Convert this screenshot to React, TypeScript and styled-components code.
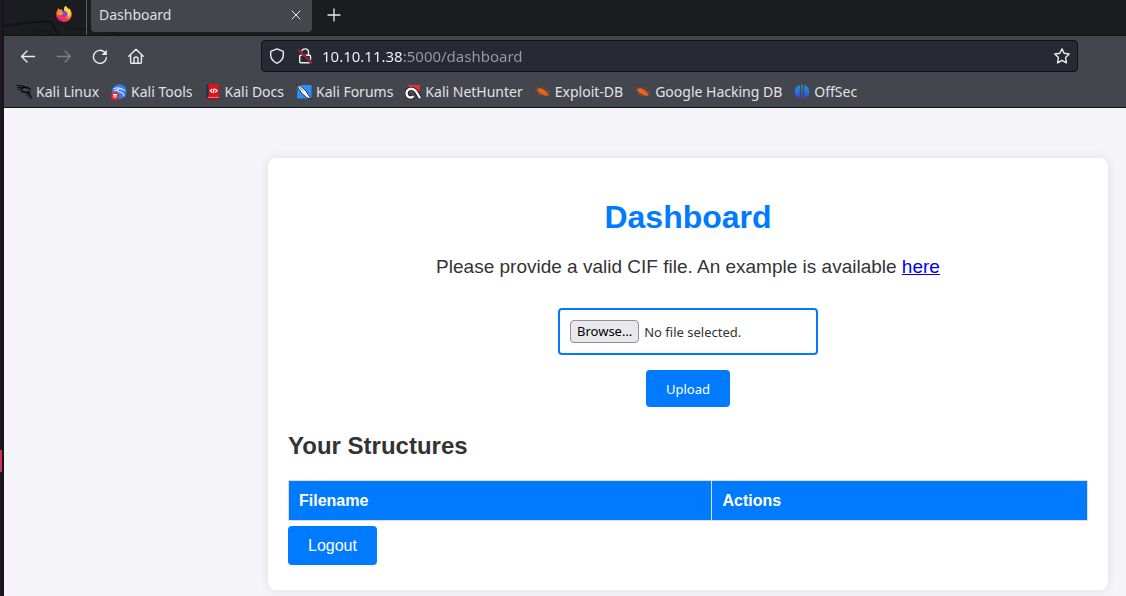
import React from "react";
import styled, { createGlobalStyle } from "styled-components";

const ui = '"Noto Sans", "Open Sans", sans-serif';
const page = '"Liberation Sans", Arial, sans-serif';
const blue = "#007bff";

const Global = createGlobalStyle`
  *, *::before, *::after { box-sizing: border-box; }
  body { margin: 0; background: #f4f4f9; }
`;

const Desktop = styled.div`
  display: flex;
  min-height: 100vh;
  overflow: hidden;
`;

const Edge = styled.div`
  flex: 0 0 4px;
  display: flex;
  flex-direction: column;
  background: #22171f;
  border-right: 2px solid #14151c;
`;

const EdgeMark = styled.span`
  height: 22px;
  margin-top: 450px;
  background: #cc3359;
`;

const Window = styled.div`
  flex: 1;
  min-width: 0;
  display: flex;
  flex-direction: column;
`;

const TabStrip = styled.div`
  position: relative;
  display: flex;
  align-items: flex-start;
  height: 36px;
  background: #1b1c20;
  border-bottom: 1px solid #111216;
`;

const Wallpaper = styled.svg`
  position: absolute;
  left: 0;
  bottom: 0;
`;

const Launcher = styled.div`
  position: relative;
  display: flex;
  justify-content: flex-end;
  width: 83px;
  height: 35px;
  padding: 5px 13px 0 0;
  border-right: 1px solid #5b5d62;
`;

const Tab = styled.div`
  position: relative;
  display: flex;
  align-items: center;
  justify-content: space-between;
  width: 221px;
  height: 32px;
  margin-left: 4px;
  padding: 0 8px 2px;
  border-radius: 0 0 4px 4px;
  background: #43464d;
  color: #dfdfe1;
  font: 14px/20px ${ui};
`;

const IconButton = styled.button<{ $w?: number; $dim?: boolean }>`
  display: flex;
  align-items: center;
  justify-content: center;
  width: ${(p) => p.$w ?? 36}px;
  height: 32px;
  padding: 0;
  border: 0;
  background: none;
  color: ${(p) => (p.$dim ? "#7d7f84" : "#ececee")};
  svg { flex: none; }
`;

const NewTab = styled(IconButton)`
  position: relative;
  margin-left: 4px;
  height: 30px;
`;

const Toolbar = styled.div`
  display: flex;
  align-items: center;
  height: 40px;
  padding-right: 48px;
  background: #43464d;
`;

const Nav = styled.nav`
  display: flex;
  flex: 0 0 257px;
  padding-left: 6px;
`;

const AddressBox = styled.div`
  flex: 1;
  display: flex;
  align-items: center;
  height: 32px;
  padding: 0 0 0 2px;
  border: 1px solid #101116;
  border-radius: 4px;
  background: #272934;
`;

const Address = styled.input`
  flex: 1;
  min-width: 0;
  height: 28px;
  padding: 0;
  margin-left: 3px;
  border: 0;
  outline: 0;
  font: 15px/28px ${ui};
  color: transparent;
  background: linear-gradient(to right, #fbfbfe 81px, #9b9ca3 81px);
  background-clip: text;
  -webkit-background-clip: text;
`;

const Bookmarks = styled.nav`
  display: flex;
  align-items: center;
  gap: 12px;
  height: 32px;
  padding-left: 12px;
  background: #43464d;
  border-bottom: 1px solid #111216;
`;

const Bookmark = styled.a`
  display: flex;
  align-items: center;
  gap: 4px;
  color: #e2e2e4;
  font: 14px/20px ${ui};
  white-space: nowrap;
  text-decoration: none;
  svg { flex: none; }
`;

const Main = styled.main`
  flex: 1;
  display: flex;
  justify-content: flex-end;
  align-items: flex-start;
  padding: 50px 18px 6px;
  background: #f4f4f9;
  color: #333;
  font: 16px/18px ${page};
`;

const Card = styled.section`
  width: 100%;
  max-width: 840px;
  padding: 20px 20px 25px;
  border-radius: 8px;
  background: #fff;
  box-shadow: 0 0 10px rgba(0, 0, 0, 0.1);
`;

const Title = styled.h1`
  margin: 20px 0;
  color: ${blue};
  font-size: 32px;
  line-height: 38px;
  text-align: center;
`;

const Intro = styled.p`
  margin: 0 0 30px;
  font-size: 19px;
  line-height: 22px;
  text-align: center;
  a { color: #0000ee; }
`;

const UploadForm = styled.form`
  display: flex;
  flex-direction: column;
  align-items: center;
  gap: 15px;
`;

const FilePicker = styled.label`
  position: relative;
  display: flex;
  align-items: center;
  gap: 5px;
  width: 260px;
  height: 47px;
  padding: 0 10px;
  border: 2px solid ${blue};
  border-radius: 4px;
  font: 13px/18px ${ui};
`;

const FileInput = styled.input`
  position: absolute;
  inset: 0;
  width: 100%;
  opacity: 0;
`;

const Browse = styled.span`
  padding: 2px 6px;
  border: 1px solid #8f8f9d;
  border-radius: 4px;
  background: #e9e9ed;
  color: #000;
  line-height: 17px;
`;

const Submit = styled.button`
  height: 37px;
  padding: 0 20px;
  border: 0;
  border-radius: 4px;
  background: ${blue};
  color: #fff;
  font: 13px/18px ${ui};
`;

const Subtitle = styled.h2`
  margin: 25px 0 20px;
  font-size: 24px;
  line-height: 28px;
`;

const Table = styled.table`
  width: 100%;
  border-collapse: collapse;
`;

const Head = styled.th<{ $w: string }>`
  width: ${(p) => p.$w};
  height: 40px;
  padding: 10px;
  border: 1px solid #ddd;
  background: ${blue};
  color: #fff;
  text-align: left;
`;

const Logout = styled.a`
  display: inline-block;
  margin-top: 5px;
  padding: 10px 20px;
  border-radius: 4px;
  background: ${blue};
  color: #fff;
  line-height: 19px;
  text-decoration: none;
`;

const line = { fill: "none", stroke: "currentColor", strokeLinecap: "round", strokeLinejoin: "round" } as const;

const Firefox = () => (
  <svg width="18" height="18" viewBox="0 0 18 18">
    <defs>
      <linearGradient id="ff" x1=".8" y1=".1" x2=".3" y2="1">
        <stop offset="0" stopColor="#ffe33d" />
        <stop offset=".4" stopColor="#ff9a27" />
        <stop offset=".7" stopColor="#ff3b46" />
        <stop offset="1" stopColor="#e4157c" />
      </linearGradient>
    </defs>
    <path d="M10.500.8c1 1.500 2 2.200 3 3.400l.8-.7c1.700 2 2.500 4 2.300 6.300C16.500 13.800 13.200 17 9 17S1.200 13.900 1.200 9.600c0-2 .5-3.600 1.400-4.900L3.500 3l.9 1.800 2.500-.3c.4 1 1 1.500 2.100 1.700C8.700 4 9.200 2.200 10.500.8Z" fill="url(#ff)" />
    <path d="M6.500 6c2-.7 4-.1 5.200 1.200 1.500 1.900.5 4.500-2.100 4.900-2.100.2-3.500-1-3.700-2.700l1.600-.3 1.500-1.100-2.500-.7Z" fill="#7f45e6" />
    <path d="M2.500 7.200 6.700 7l1.800 1-1.800 1.400-.3 1.300C4.600 9.500 3.500 9.600 2 10.200Z" fill="#ff9d1e" />
    <path d="M10.500.8c-1.300 1.500-1.400 3-.8 4.700 2 .5 3.200 1.900 3.300 3.900l-.2 2.600c1.700-1 2.600-2.700 2.400-4.600-.3-3-3.300-4.300-4.700-6.600Z" fill="#ffd83b" />
  </svg>
);

const KaliLinux = () => (
  <svg width="16" height="16" viewBox="0 0 16 16">
    <path d="M.3 1.300 5.500 1.700l4 1.300M.7 4l4-.8 4.600.1M2.200 6l2-1.200" stroke="#09090b" strokeWidth="1" fill="none" />
    <path d="M9.500 3.300C6.500 3.300 5 4.400 5.300 6.100c.4 1.800 2.600 2.100 4.800 2.200 2.900.2 4.200 1.800 4.900 6.200" stroke="#09090b" strokeWidth="1.500" fill="none" />
    <path d="m9 2.700 3.400.4 2.900 2.300-.7.600-2.600-1.200-2.600-.6Z" fill="#09090b" />
    <path d="m10.200 8.300 2.700-1 1.700 1M11.500 9l-.8 2.300 1.600 1" stroke="#09090b" strokeWidth=".9" fill="none" />
  </svg>
);
const KaliTools = () => (
  <svg width="16" height="16" viewBox="0 0 16 16">
    <circle cx="8.300" cy="7.600" r="7.300" fill="#367bf0" />
    <path d="M2.300 4.500 7 3.700l4 1M3 6.700l4.500-1.500M10.500 5C7 4 5.500 6.500 7.500 7.500c2 .8 4.800 0 5.700 5M10.500 5l3.500 1.600" stroke="#dceaff" strokeWidth="1.100" fill="none" />
    <circle cx="4" cy="12" r="3.900" fill="#e42630" />
    <path d="M1.900 10.500h4.200M3.100 10.500v3.300M5 10.500v3.300" stroke="#fff" strokeWidth="1" fill="none" />
  </svg>
);
const KaliDocs = () => (
  <svg width="16" height="16" viewBox="0 0 16 16">
    <path d="M1.500.5h3v14h-3z" fill="#252b4a" />
    <path d="M3.500 0H14v13.500H3.500z" fill="#d9141b" />
    <path d="M1.500 13.300H14v2.200H3Q1.500 15.300 1.500 13.300Z" fill="#a90f16" />
    <path d="M3 13.400h11" stroke="#f1c6c8" strokeWidth=".7" />
    <path d="M7.200 5 5.300 6.800l1.900 1.800M9.200 4.500 8.200 9.100M10.200 5l1.900 1.800-1.900 1.800" fill="none" stroke="#fff" strokeWidth="1.200" />
  </svg>
);
const KaliForums = () => (
  <svg width="16" height="16" viewBox="0 0 16 16">
    <path d="M1.500 1H15.500v13.500H1Z" fill="#278fff" />
    <path d="M0 .7 4.500 2 10 7l2.200 3.500 3.300 4.700-5-1.700L5.500 9Z" fill="#fff" stroke="#17202d" strokeWidth=".9" />
    <path d="m2 2 5.500 5" stroke="#17202d" strokeWidth=".6" />
  </svg>
);
const NetHunter = () => (
  <svg width="16" height="16" viewBox="0 0 16 16">
    <path d="M3 1h12.500l-2 9.500L5 7Z" fill="#e5303a" />
    <path d="M15 14.200 11.700 8.500C10 5.300 6.500 3.700 3.500 5.500.8 7.300 1 11 3.200 12.700c1.700 1.300 4.300 1 5.300-.5" fill="none" stroke="#111" strokeWidth="4" />
    <path d="M15 14.200 11.700 8.500C10 5.300 6.500 3.700 3.500 5.500.8 7.300 1 11 3.200 12.700c1.700 1.300 4.300 1 5.300-.5" fill="none" stroke="#fff" strokeWidth="2.400" />
  </svg>
);
const Bug = () => (
  <svg width="16" height="16" viewBox="0 0 16 16">
    <path d="M2.500 5C4.500 3.600 7.500 4 9.500 6.200c2 .7 3.200 2.600 4 5.300-2.600.6-5 .3-6.500-1.400C4.500 9.500 2.500 7.600 2.500 5Z" fill="#ef6213" />
    <path d="m3 6.800-2.500.3M4 4.600 1 3.800M7 4.600l.6-1.800M9.600 6.300l2-2M11.500 8l3.700-.7M5 9.300 2.500 10.500M7.500 10.500l-2.600 1.200M12.700 10h2.300" stroke="#a95630" strokeWidth=".8" fill="none" />
  </svg>
);
const OffSec = () => (
  <svg width="16" height="16" viewBox="0 0 16 16">
    <defs>
      <linearGradient id="os" x1="0" y1="0" x2="0" y2="16" gradientUnits="userSpaceOnUse">
        <stop offset="0" stopColor="#13a7c4" />
        <stop offset=".5" stopColor="#2c6fe0" />
        <stop offset="1" stopColor="#6a22cf" />
      </linearGradient>
    </defs>
    <path d="M5.800 1v13.500C2.800 13.400.6 11.200.6 8S2.800 1.800 5.800 1ZM7.300.6h1.400v14.900H7.300ZM10.200 1v13.500c3-1.100 5.200-3.300 5.200-6.500s-2.200-6.200-5.200-7Z" fill="url(#os)" />
  </svg>
);

const bookmarks: [string, () => React.JSX.Element][] = [
  ["Kali Linux", KaliLinux],
  ["Kali Tools", KaliTools],
  ["Kali Docs", KaliDocs],
  ["Kali Forums", KaliForums],
  ["Kali NetHunter", NetHunter],
  ["Exploit-DB", Bug],
  ["Google Hacking DB", Bug],
  ["OffSec", OffSec],
];

export default function App() {
  return (
    <Desktop>
      <Global />
      <Edge><EdgeMark /></Edge>
      <Window>
        <TabStrip>
          <Wallpaper width="130" height="18" viewBox="0 0 130 18" aria-hidden="true">
            <path d="M0 9C16 6 32 4 47 5l8 13" fill="none" stroke="#121317" strokeWidth="2" />
            <path d="M28 18c3-4 8-5 14-4l7 4M66 12c18-1 34 0 50 6" fill="none" stroke="#15161a" strokeWidth="2" />
          </Wallpaper>
          <Launcher><Firefox /></Launcher>
          <Tab>
            <span>Dashboard</span>
            <IconButton $w={16} aria-label="Close tab">
              <svg width="10" height="10" viewBox="0 0 10 10" {...line}><path d="m1 1 8 8M9 1 1 9" /></svg>
            </IconButton>
          </Tab>
          <NewTab aria-label="New tab">
            <svg width="14" height="14" viewBox="0 0 14 14" {...line} strokeWidth="1.300"><path d="M7 1v12M1 7h12" /></svg>
          </NewTab>
        </TabStrip>
        <Toolbar>
          <Nav aria-label="Navigation">
            <IconButton aria-label="Back">
              <svg width="16" height="16" viewBox="0 0 16 16" {...line} strokeWidth="1.400"><path d="M14.500 8.500h-13M7 3 1.500 8.500 7 14" /></svg>
            </IconButton>
            <IconButton $dim aria-label="Forward">
              <svg width="16" height="16" viewBox="0 0 16 16" {...line} strokeWidth="1.300"><path d="M1.500 8.500h13M9 3l5.500 5.500L9 14" /></svg>
            </IconButton>
            <IconButton aria-label="Reload">
              <svg width="16" height="16" viewBox="0 0 16 16" {...line} strokeWidth="1.400">
                <path d="M14.400 9.500A6.500 6.500 0 1 1 12.600 4.300" />
                <path d="M14.800 1.700v5.200H9.600Z" fill="currentColor" stroke="none" />
              </svg>
            </IconButton>
            <IconButton aria-label="Home">
              <svg width="16" height="16" viewBox="0 0 16 16" {...line} strokeWidth="1.400">
                <path d="M.8 8.300 8 1.300l7.200 7M2.600 6.800v7.400q0 1 1 1h8.800q1 0 1-1V6.800M6 15v-4.200Q6 9 8 9t2 1.800V15" />
              </svg>
            </IconButton>
          </Nav>
          <AddressBox>
            <IconButton $w={26} aria-label="Tracking protection">
              <svg width="16" height="16" viewBox="0 0 16 16" {...line} strokeWidth="1.400">
                <path d="M8 .8 14.300 3.300V7c0 3.500-2 6.300-6.300 8.300C3.700 13.300 1.700 10.500 1.700 7V3.300Z" />
              </svg>
            </IconButton>
            <IconButton $w={29} aria-label="Connection not secure">
              <svg width="16" height="16" viewBox="0 0 16 16" {...line} strokeWidth="1.400">
                <path d="M4.700 7V4.300a3.400 3.400 0 0 1 6.800 0V7M3.700 7.200h8.800q1 0 1 1v5.600q0 1-1 1H3.700q-1 0-1-1V8.200q0-1 1-1" />
                <path d="M1.500 2 14.500 14.700" stroke="#272934" strokeWidth="3" />
                <path d="M1.500 2 14.500 14.700" stroke="#e3143f" />
              </svg>
            </IconButton>
            <Address aria-label="Address" defaultValue="10.10.11.38:5000/dashboard" spellCheck={false} />
            <IconButton $w={30} aria-label="Bookmark this page">
              <svg width="16" height="16" viewBox="0 0 16 16" {...line} strokeWidth="1.400">
                <path d="m8 .9 2.100 4.300 5.100.8-3.600 3.500.8 5.400L8 12.400l-4.400 2.500.8-5.400L.8 6l5.100-.8Z" />
              </svg>
            </IconButton>
          </AddressBox>
        </Toolbar>
        <Bookmarks aria-label="Bookmarks">
          {bookmarks.map(([name, Icon]) => (
            <Bookmark href="#" key={name}><Icon />{name}</Bookmark>
          ))}
        </Bookmarks>
        <Main>
          <Card>
            <Title>Dashboard</Title>
            <Intro>Please provide a valid CIF file. An example is available <a href="#">here</a></Intro>
            <UploadForm onSubmit={(e) => e.preventDefault()}>
              <FilePicker>
                <FileInput type="file" />
                <Browse>Browse…</Browse>
                <span>No file selected.</span>
              </FilePicker>
              <Submit type="submit">Upload</Submit>
            </UploadForm>
            <Subtitle>Your Structures</Subtitle>
            <Table>
              <thead>
                <tr>
                  <Head $w="53%" scope="col">Filename</Head>
                  <Head $w="47%" scope="col">Actions</Head>
                </tr>
              </thead>
            </Table>
            <Logout href="#">Logout</Logout>
          </Card>
        </Main>
      </Window>
    </Desktop>
  );
}
